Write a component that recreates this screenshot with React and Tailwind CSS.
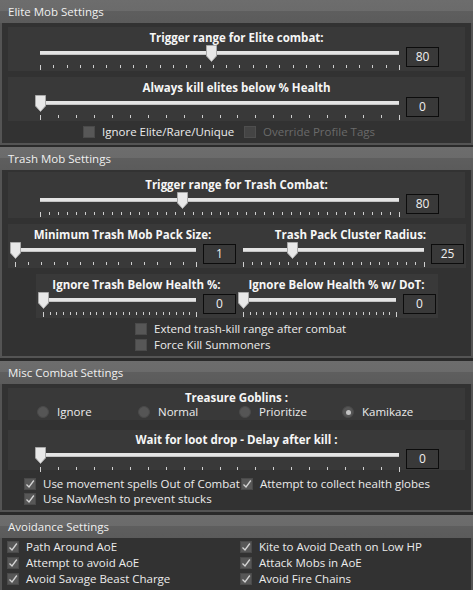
import React from 'react';

// Windows-forms style dark settings panel

const Thumb = () => (
  <svg width="11" height="17" viewBox="0 0 11 17" className="block">
    <polygon points="0.5,0.5 10.5,0.5 10.5,11 5.5,16.5 0.5,11" fill="#e8e8e8" stroke="#a9a9a9" />
  </svg>
);

function Slider({ wClass, intervals, pos = 0, value }) {
  const ticks = Array.from({ length: intervals + 1 }, (_, i) => i);
  return (
    <div className="flex items-start h-[26px]">
      <div className={`h-[26px] px-[6px] ${wClass}`}>
        <div className="relative mt-[6px] h-[4px] bg-[#e4e4e4] border-b border-[#c4c4c4]">
          <div className="absolute top-[-6px]" style={{ left: `calc(${pos * 100}% - 5.5px)` }}>
            <Thumb />
          </div>
        </div>
        <div className="relative mt-[10px] h-[5px]">
          {ticks.map((i) => (
            <span
              key={i}
              className={`absolute top-0 w-px bg-[#cfcfcf] ${i === 0 || i === intervals ? 'h-[5px]' : 'h-[3px]'}`}
              style={{ left: `${(i / intervals) * 100}%` }}
            />
          ))}
        </div>
      </div>
      <div className="ml-[1px] mt-[2px] w-[33px] h-[20px] border border-[#0c0c0c] flex items-center justify-center text-[12px] text-[#f0f0f0]">
        {value}
      </div>
    </div>
  );
}

function LabeledSlider({ label, ...rest }) {
  return (
    <div className="inline-flex flex-col">
      <div className="h-[14px] leading-[14px] text-center font-bold text-[#f6f6f6] whitespace-nowrap">
        {label}
      </div>
      <Slider {...rest} />
    </div>
  );
}

function Check({ label, checked, disabled, className = '' }) {
  return (
    <div className={`flex items-center h-[14px] ${className}`}>
      <span
        className={`w-[12px] h-[12px] shrink-0 flex items-center justify-center border ${
          disabled ? 'bg-[#444444] border-[#4e4e4e]' : 'bg-[#575757] border-[#4a4a4a]'
        }`}
      >
        {checked && (
          <svg width="10" height="10" viewBox="0 0 10 10">
            <polyline points="1.5,5.5 4,8 8.8,1.5" fill="none" stroke="#d4d4d4" strokeWidth="1.3" />
          </svg>
        )}
      </span>
      <span className={`ml-[7px] whitespace-nowrap ${disabled ? 'text-[#6a6a6a]' : 'text-[#ececec]'}`}>{label}</span>
    </div>
  );
}

function Radio({ label, selected, className = '' }) {
  return (
    <div className={`flex items-center h-[14px] ${className}`}>
      <span className="w-[12px] h-[12px] rounded-full bg-[#555555] border border-[#4a4a4a] flex items-center justify-center">
        {selected && <span className="w-[5px] h-[5px] rounded-full bg-[#c4c4c4]" />}
      </span>
      <span className="ml-[8px] text-[#ececec]">{label}</span>
    </div>
  );
}

function Section({ title, bodyClass, children }) {
  return (
    <div>
      <div className="h-[23px] flex items-center pl-[8px] text-[#f0f0f0] bg-[linear-gradient(to_bottom,#6d6d6d_0%,#6b6b6b_48%,#5e5e5e_50%,#5b5b5b_100%)]">
        {title}
      </div>
      <div className={`border-x-2 border-b-2 border-[#545454] bg-[#323232] ${bodyClass}`}>{children}</div>
    </div>
  );
}

export default function App() {
  return (
    <div className="w-[473px] h-[590px] overflow-hidden bg-[#2a2a2a] font-['Open_Sans',sans-serif] text-[11.5px] leading-[14px]">
      <Section title="Elite Mob Settings" bodyClass="h-[122px] pt-[4px]">
        <div className="mx-[6px] h-[44px] pt-[4px] pl-[26px] bg-[#393939]">
          <LabeledSlider label="Trigger range for Elite combat:" wClass="w-[371px]" intervals={27} pos={0.479} value="80" />
        </div>
        <div className="mx-[6px] mt-[6px] h-[44px] pt-[4px] pl-[26px] bg-[#393939]">
          <LabeledSlider label="Always kill elites below % Health" wClass="w-[371px]" intervals={20} pos={0} value="0" />
        </div>
        <div className="mt-[4px] ml-[81px] flex">
          <Check label="Ignore Elite/Rare/Unique" className="w-[161px]" />
          <Check label="Override Profile Tags" disabled />
        </div>
      </Section>

      <div className="h-[2px]" />

      <Section title="Trash Mob Settings" bodyClass="h-[188px] pt-[2px]">
        <div className="mx-[6px] h-[46px] pt-[6px] pl-[26px] bg-[#393939]">
          <LabeledSlider label="Trigger range for Trash Combat:" wClass="w-[371px]" intervals={40} pos={0.398} value="80" />
        </div>
        <div className="mt-[6px] ml-[6px] flex">
          <div className="w-[229px] h-[44px] pt-[4px] pl-[1px] bg-[#393939]">
            <LabeledSlider label="Minimum Trash Mob Pack Size:" wClass="w-[193px]" intervals={14} pos={0} value="1" />
          </div>
          <div className="w-[229px] h-[44px] pt-[4px] bg-[#393939]">
            <LabeledSlider label="Trash Pack Cluster Radius:" wClass="w-[193px]" intervals={20} pos={0.276} value="25" />
          </div>
        </div>
        <div className="mt-[6px] ml-[34px] flex">
          <div className="w-[201px] h-[44px] pt-[4px] pl-[1px] bg-[#393939]">
            <LabeledSlider label="Ignore Trash Below Health %:" wClass="w-[165px]" intervals={23} pos={0} value="0" />
          </div>
          <div className="w-[201px] h-[44px] pt-[4px] bg-[#393939]">
            <LabeledSlider label="Ignore Below Health % w/ DoT:" wClass="w-[165px]" intervals={23} pos={0} value="0" />
          </div>
        </div>
        <div className="mt-[4px] ml-[133px] flex flex-col gap-[2px]">
          <Check label="Extend trash-kill range after combat" />
          <Check label="Force Kill Summoners" />
        </div>
      </Section>

      <div className="h-[3px]" />

      <Section title="Misc Combat Settings" bodyClass="h-[128px] pt-[4px]">
        <div className="mx-[6px] h-[32px] pt-[3px] bg-[#393939]">
          <div className="h-[14px] text-center font-bold text-[#f6f6f6]">Treasure Goblins :</div>
          <div className="flex pl-[29px]">
            <Radio label="Ignore" className="w-[101px]" />
            <Radio label="Normal" className="w-[101px]" />
            <Radio label="Prioritize" className="w-[103px]" />
            <Radio label="Kamikaze" selected />
          </div>
        </div>
        <div className="mx-[6px] mt-[10px] h-[40px] pt-[3px] pl-[26px] bg-[#393939]">
          <LabeledSlider label="Wait for loot drop - Delay after kill :" wClass="w-[371px]" intervals={20} pos={0} value="0" />
        </div>
        <div className="mt-[7px] ml-[22px] grid grid-cols-[217px_1fr] gap-y-[1px]">
          <Check label="Use movement spells Out of Combat" checked />
          <Check label="Attempt to collect health globes" checked />
          <Check label="Use NavMesh to prevent stucks" checked />
        </div>
      </Section>

      <div className="h-[3px]" />

      <Section title="Avoidance Settings" bodyClass="h-[60px] pt-[2px]">
        <div className="ml-[5px] grid grid-cols-[233px_1fr] gap-y-[2px]">
          <Check label="Path Around AoE" checked />
          <Check label="Kite to Avoid Death on Low HP" checked />
          <Check label="Attempt to avoid AoE" checked />
          <Check label="Attack Mobs in AoE" checked />
          <Check label="Avoid Savage Beast Charge" checked />
          <Check label="Avoid Fire Chains" checked />
        </div>
      </Section>
    </div>
  );
}
